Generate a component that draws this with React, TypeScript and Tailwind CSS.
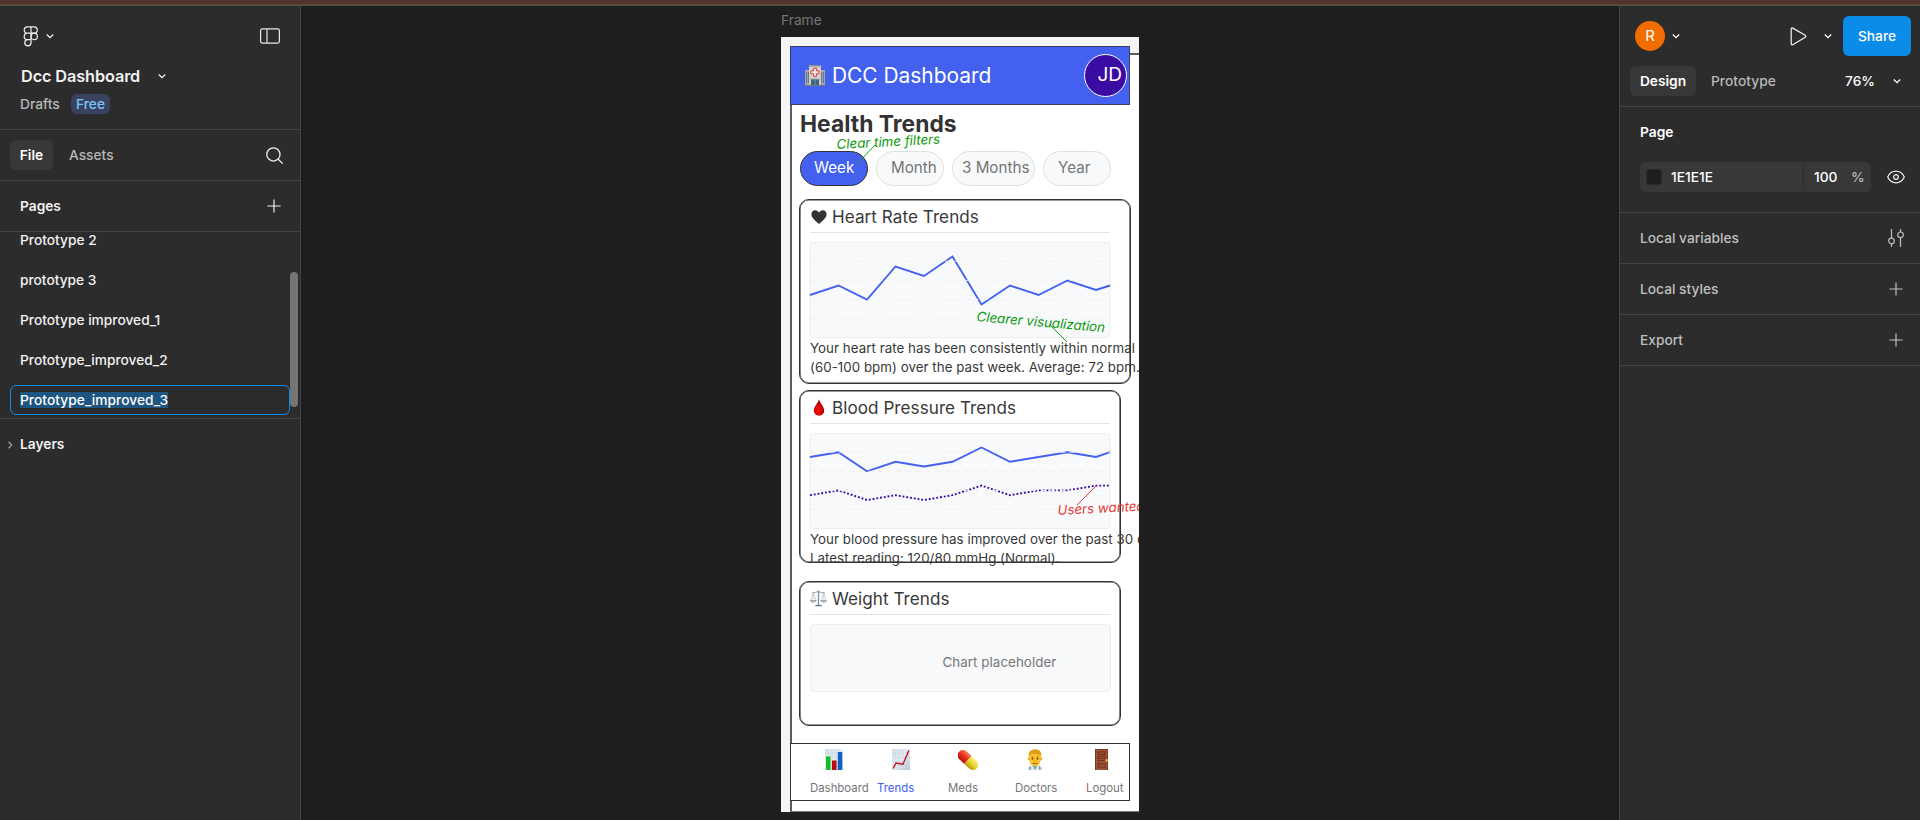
import type { ReactNode } from "react";

const UI = "font-['Inter',sans-serif] text-[13.75px] tracking-[0px]";

function Chevron({ className = "" }: { className?: string }) {
  return (
    <svg className={`h-2 w-2 shrink-0 ${className}`} viewBox="0 0 8 8" fill="none" stroke="currentColor" strokeWidth="1.3">
      <path d="M.8 2.500 4 5.700 7.200 2.500" />
    </svg>
  );
}

function Plus() {
  return (
    <svg className="h-[14px] w-[14px] shrink-0" viewBox="0 0 14 14" stroke="currentColor" strokeWidth="1.2">
      <path d="M7 .4v13.2M.4 7h13.2" />
    </svg>
  );
}

function LeftPanel() {
  return (
    <aside className={`${UI} flex w-[301px] shrink-0 flex-col border-r border-[#444] bg-[#2c2c2c] font-[450] text-[#f2f2f2]`}>
      <header className="flex h-[124px] shrink-0 flex-col border-b border-[#444] px-5">
        <div className="mt-4 flex h-7 items-center">
          <svg className="ml-[3px] h-[21px] w-4" viewBox="0 0 16 21" fill="none" stroke="#f0f0f0" strokeWidth="1.2">
            <path d="M8 .9H4.4a3.1 3.1 0 0 0 0 6.3H8zM8 .9h3.1a3.1 3.1 0 0 1 0 6.3H8zM8 7.2H4.4a3.1 3.1 0 0 0 0 6.4H8zM8 13.6H4.6a3.1 3.1 0 1 0 3.4 3.1z" />
            <circle cx="11.2" cy="10.4" r="3.2" />
          </svg>
          <Chevron className="ml-[7px]" />
          <svg className="ml-auto h-4 w-5" viewBox="0 0 20 16" fill="none" stroke="#e8e8e8" strokeWidth="1.2">
            <rect x=".6" y=".9" width="18.8" height="14.2" rx="1.8" />
            <path d="M7 1v14" />
          </svg>
        </div>
        <div className="mt-3 flex h-7 items-center">
          <span className="pl-px text-[16.25px] leading-6 font-[600] tracking-[-0.1px]">Dcc Dashboard</span>
          <Chevron className="mr-[114px] ml-auto" />
        </div>
        <div className="mt-1 flex h-5 items-center">
          <span className="w-[41px] text-[#b8b8b8]">Drafts</span>
          <span className="ml-[10px] flex h-5 w-[39px] items-center justify-center rounded-md bg-[#394360] text-[#7cc4f8]">Free</span>
        </div>
      </header>
      <div className="flex h-[51px] shrink-0 items-center border-b border-[#444] pr-[17px] pl-[10px]">
        <span className="flex h-[30px] w-[43px] items-center justify-center rounded-md bg-[#383838] font-[600] text-white">File</span>
        <span className="ml-4 text-[#b8b8b8]">Assets</span>
        <svg className="ml-auto h-[17px] w-[17px]" viewBox="0 0 17 17" fill="none" stroke="#f0f0f0" strokeWidth="1.25">
          <circle cx="7.4" cy="7.4" r="6.6" />
          <path d="m12.1 12.1 4.5 4.5" />
        </svg>
      </div>
      <div className="flex h-[51px] shrink-0 items-center justify-between border-b border-[#444] pr-[19px] pl-5 font-[600]">
        <span>Pages</span>
        <Plus />
      </div>
      <div className="flex h-[187px] shrink-0 overflow-hidden border-b border-[#444]">
        <ul className="-mt-3 flex w-[290px] flex-col">
          {["Prototype 2", "prototype 3", "Prototype improved_1", "Prototype_improved_2"].map((n) => (
            <li key={n} className="flex h-10 shrink-0 items-center pl-5">{n}</li>
          ))}
          <li className="mt-[5px] ml-[10px] flex h-[30px] shrink-0 items-center rounded-md border border-[#0c8ce9] pl-[9px]">
            <span className="bg-[#1f5581] leading-4 tracking-[0.05px] text-white">Prototype_improved_3</span>
          </li>
        </ul>
        <div className="mt-10 h-[135px] w-2 rounded-full bg-[#757575]" />
      </div>
      <div className="flex h-[51px] shrink-0 items-center pl-[6px] font-[600]">
        <Chevron className="-rotate-90 text-[#999]" />
        <span className="ml-[6px]">Layers</span>
      </div>
    </aside>
  );
}

function Section({ title, children }: { title: string; children: ReactNode }) {
  return (
    <div className="flex h-[51px] shrink-0 items-center justify-between border-b border-[#444] pr-[17px] pl-5 font-[550] text-[#bfbfbf]">
      <span>{title}</span>
      {children}
    </div>
  );
}

function RightPanel() {
  return (
    <aside className={`${UI} flex w-[301px] shrink-0 flex-col border-l border-[#444] bg-[#2c2c2c] font-[450] text-white`}>
      <header className="flex h-[101px] shrink-0 flex-col border-b border-[#444]">
        <div className="mt-[10px] flex h-10 items-center pr-[9px] pl-[15px]">
          <span className="flex h-[30px] w-[30px] items-center justify-center rounded-full bg-[#f26d00] text-[15px] font-normal">R</span>
          <Chevron className="ml-[7px]" />
          <svg className="ml-auto h-[19px] w-[17px]" viewBox="0 0 17 19" fill="none" stroke="#f0f0f0" strokeWidth="1.25" strokeLinejoin="round">
            <path d="M1.2 2.1c0-.9.8-1.4 1.6-1l12.4 7.2c.8.5.8 1.5 0 2L2.8 17.8c-.8.4-1.6-.1-1.6-1z" />
          </svg>
          <Chevron className="ml-[17px]" />
          <span className="ml-[11px] flex h-10 w-[68px] items-center justify-center rounded-md bg-[#0c8ce9] font-[550]">Share</span>
        </div>
        <div className="mt-[10px] flex h-[30px] items-center pr-[19px] pl-[10px]">
          <span className="flex h-[30px] w-[66px] items-center justify-center rounded-md bg-[#383838] font-[600]">Design</span>
          <span className="ml-[15px] tracking-[0.05px] text-[#b8b8b8]">Prototype</span>
          <span className="ml-auto">76%</span>
          <Chevron className="ml-[18px]" />
        </div>
      </header>
      <div className="flex h-[106px] shrink-0 flex-col border-b border-[#444] px-5">
        <span className="mt-[15px] leading-5 font-[600]">Page</span>
        <div className="mt-5 flex h-[30px] w-[265px] items-center justify-between">
          <div className="flex h-[30px] w-[231px] items-center rounded-md bg-[#383838]">
            <span className="ml-[6px] h-4 w-4 rounded-[3px] border border-[#2b2b2b] bg-[#1e1e1e]" />
            <span className="ml-[9px] w-[132px]">1E1E1E</span>
            <span className="h-7 w-px bg-[#2c2c2c]" />
            <span className="ml-[10px] w-[38px]">100</span>
            <span className="-ml-px text-[#b8b8b8]">%</span>
          </div>
          <svg className="h-[14px] w-[18px]" viewBox="0 0 18 14" fill="none" stroke="#f0f0f0" strokeWidth="1.2">
            <path d="M.7 7C2.4 3.200 5.400 1.200 9 1.200S15.600 3.200 17.300 7C15.600 10.800 12.600 12.800 9 12.800S2.400 10.800.7 7z" />
            <circle cx="9" cy="7" r="2.300" />
          </svg>
        </div>
      </div>
      <Section title="Local variables">
        <svg className="-mr-px h-[18px] w-4" viewBox="0 0 16 18" fill="none" stroke="currentColor" strokeWidth="1.2">
          <path d="M3.500 0v9M3.500 14.800V18M12.500 0v3M12.500 8.600V18" />
          <circle cx="3.500" cy="11.900" r="2.800" />
          <circle cx="12.500" cy="5.800" r="2.800" />
        </svg>
      </Section>
      <Section title="Local styles"><Plus /></Section>
      <Section title="Export"><Plus /></Section>
    </aside>
  );
}

function Hospital() {
  return (
    <svg className="-mt-px h-[21px] w-5" viewBox="0 0 20 21">
      <path d="M0 5h5v15H0zM15 5h5v15h-5z" fill="#a3a8aa" />
      <path d="M4 1h12v19H4z" fill="#d0d0ce" />
      <path d="M3.500 0h13v1.500h-13z" fill="#8d9296" />
      <path d="M1.200 7h.9v11h-.9zM3 7h.8v11H3zM16.200 7h.8v11h-.8zM17.900 7h.9v11h-.9z" fill="#5b6c7c" />
      <path d="M8.600 3.200h2.800v2.700h2.700v2.800h-2.700v2.700H8.600V8.700H5.900V5.900h2.700z" fill="#f4efee" stroke="#e0393e" strokeWidth="1" />
      <path d="M6 15h8v5H6z" fill="#3f6380" />
      <path d="M5.500 13.800h9v1.400h-9z" fill="#75868f" />
      <path d="M10 15v5" stroke="#9fb9c9" strokeWidth=".5" />
      <path d="M0 19.800h20V21H0z" fill="#777b78" />
    </svg>
  );
}

function Heart() {
  return (
    <svg className="h-[14px] w-4" viewBox="0 0 16 14">
      <path d="M8 14C5 11.300.4 8.300.4 4.300.4 1.800 2.100.2 4.200.2 5.900.2 7.300 1.100 8 2.800 8.700 1.100 10.100.2 11.800.2c2.100 0 3.800 1.600 3.800 4.100 0 4-4.600 7-7.600 9.700z" fill="#333" />
    </svg>
  );
}

function Drop() {
  return (
    <svg className="-mt-[2px] h-[17px] w-4" viewBox="0 0 16 17">
      <defs>
        <radialGradient id="blood" cx=".42" cy=".68" r=".6">
          <stop offset="0" stopColor="#f11208" />
          <stop offset=".55" stopColor="#d50705" />
          <stop offset="1" stopColor="#850000" />
        </radialGradient>
      </defs>
      <path d="M8 .3C9 4.500 13.200 7.600 13.200 11.700A5.100 5.100 0 0 1 8 16.800a5.100 5.100 0 0 1-5.200-5.100C2.800 7.600 7 4.500 8 .3z" fill="url(#blood)" />
    </svg>
  );
}

function Scales() {
  return (
    <svg className="-mt-[2px] h-[17px] w-[17px]" viewBox="0 0 17 17" fill="none" stroke="#83919f" strokeWidth=".7">
      <path d="M8.500.5v14" strokeWidth="1.300" />
      <path d="M2.500 2.600C5 3 6 1.500 8.500 1.800S12 3 14.500 2.600" strokeWidth="1" />
      <path d="M3.200 2.700.8 10.500M3.200 2.700l2.700 7.800M3.200 2.700v7.800M13.800 2.700l-2.700 7.800M13.800 2.700l2.400 7.800M13.800 2.700v7.800" stroke="#b4bec8" />
      <path d="M.3 10.500h6c-.5 2.200-5.500 2.200-6 0zM10.700 10.500h6c-.5 2.200-5.500 2.200-6 0z" fill="#c3ccd5" />
      <path d="M5 16.300c0-1.600 1.500-1.300 3.500-1.800 2 .5 3.500.2 3.500 1.800z" fill="#697887" stroke="none" />
    </svg>
  );
}

function GraphTile({ children, id }: { children: ReactNode; id: string }) {
  return (
    <svg className="h-[21px] w-[18px]" viewBox="0 0 18 21">
      <defs>
        <linearGradient id={id} x1="0" y1="0" x2="1" y2="1">
          <stop offset="0" stopColor="#d0dfea" />
          <stop offset=".5" stopColor="#e6ecf2" />
          <stop offset="1" stopColor="#b9c9d8" />
        </linearGradient>
      </defs>
      <path d="M0 0h18v21H0z" fill={`url(#${id})`} />
      <path d="M0 4.200h18M0 8.400h18M0 12.600h18M0 16.800h18M3.600 0v21M7.200 0v21M10.800 0v21M14.400 0v21" stroke="#c2ced9" strokeWidth=".4" />
      {children}
    </svg>
  );
}

function Pill() {
  return (
    <svg className="h-5 w-5" viewBox="0 0 20 20">
      <defs>
        <linearGradient id="pillred" x1="0" y1="0" x2="0" y2="1">
          <stop offset="0" stopColor="#ff7a54" />
          <stop offset=".5" stopColor="#e63320" />
          <stop offset="1" stopColor="#b80f0d" />
        </linearGradient>
        <linearGradient id="pillyellow" x1="0" y1="0" x2="0" y2="1">
          <stop offset="0" stopColor="#fff28c" />
          <stop offset=".5" stopColor="#eed62c" />
          <stop offset="1" stopColor="#b39c0c" />
        </linearGradient>
      </defs>
      <g transform="rotate(43 10 10)">
        <path d="M10 4.600H3.200a5.400 5.400 0 0 0 0 10.800H10z" fill="url(#pillred)" />
        <path d="M10 4.600h6.800a5.400 5.400 0 0 1 0 10.800H10z" fill="url(#pillyellow)" />
      </g>
    </svg>
  );
}

function Doctor() {
  return (
    <svg className="h-[21px] w-[18px]" viewBox="0 0 18 21">
      <path d="M1 21c.3-3.600 3-4.500 8-4.500s7.700.9 8 4.500z" fill="#dfe7ed" />
      <path d="m6.300 16 2.700 5 2.700-5z" fill="#4fa9bf" />
      <path d="M4.500 17.300c-.5 1.200-.6 2.200-.4 3.700M13.500 17.300c.5 1.200.6 2.200.4 3.700" stroke="#58656d" strokeWidth=".9" fill="none" />
      <ellipse cx="9" cy="9.500" rx="6" ry="8" fill="#fbc42c" />
      <circle cx="3" cy="9.800" r="1.400" fill="#f0b01e" />
      <circle cx="15" cy="9.800" r="1.400" fill="#f0b01e" />
      <path d="M2.900 8.500C1.700 3 5 .2 9.300.2S16.300 3 15.100 8.500L14 5.400C11 5.600 8 5.400 6 4.300L4 6z" fill="#e09d12" />
      <path d="M5.300 7.900h2.200M10.500 7.900h2.200" stroke="#a06b14" strokeWidth=".8" />
      <circle cx="6.500" cy="9.700" r=".9" fill="#51341c" />
      <circle cx="11.500" cy="9.700" r=".9" fill="#51341c" />
      <path d="M8.200 11.800h1.600" stroke="#d28a15" strokeWidth=".7" />
      <path d="M6.700 14.200q2.300.9 4.600 0" stroke="#8d4b12" strokeWidth=".9" fill="none" />
    </svg>
  );
}

function Door() {
  return (
    <svg className="h-[21px] w-[13px]" viewBox="0 0 13 21">
      <path d="M0 0h13v21H0z" fill="#783b22" />
      <path d="M1 1h11v20H1z" fill="#a4563a" />
      <path d="M2.800 2.800h7.400v2.700H2.800zM2.800 7h7.400v2.700H2.800zM2.800 14.500h7.400v4.300H2.800z" fill="#96492f" stroke="#6c301a" strokeWidth=".8" />
      <path d="M2.800 11.700h7" stroke="#6c301a" strokeWidth="1.200" />
      <circle cx="11.800" cy="11.200" r="1.300" fill="#e6b130" />
    </svg>
  );
}

const GRID = [19.2, 38.3, 57.4, 76.5];

function Chart({ line, dotted }: { line: string; dotted?: string }) {
  return (
    <svg className="-ml-px block h-24 w-[302px]" viewBox="-0.5 0 302 96" fill="none">
      <rect x=".5" y=".5" width="300" height="95" rx="3.800" fill="#f8f9fb" stroke="#ededef" />
      <polyline points={line} stroke="#4361ee" strokeWidth="1.900" />
      {dotted && <polyline points={dotted} stroke="#3a0ca3" strokeWidth="1.900" strokeDasharray="1.900 1.900" />}
      {GRID.map((y) => (
        <path key={y} d={`M1 ${y}H300`} stroke="#eeeef0" strokeWidth=".95" strokeDasharray="4.800 4.800" />
      ))}
    </svg>
  );
}

function Card({ icon, title, className, children }: { icon: ReactNode; title: string; className: string; children: ReactNode }) {
  return (
    <section className={`relative shrink-0 rounded-[10px] border border-[#333] shadow-[inset_0_0_0_0.6px_#333] ${className}`}>
      <div className="-mt-px ml-[10px] flex h-[34px] w-[300px] items-center border-b border-[#e4e4e4] pt-[3px]">
        <span className="flex w-[17px] justify-center">{icon}</span>
        <span className="ml-[5px] text-[17.100px] leading-5 tracking-[0.05px] whitespace-nowrap">{title}</span>
      </div>
      <div className="mt-[9px] ml-[10px]">{children}</div>
    </section>
  );
}

function Note({ className, children }: { className: string; children: ReactNode }) {
  return <span className={`absolute origin-bottom-left text-[13.300px] leading-4 whitespace-nowrap italic ${className}`}>{children}</span>;
}

const NAV = [
  { label: "Dashboard", icon: <GraphTile id="tile1"><path d="M1 7.500h4.500V21H1z" fill="#12bd24" /><path d="M7 11.500h4.500V21H7z" fill="#bd0b18" /><path d="M12.800 3h4.400v18h-4.400z" fill="#0d62c4" /></GraphTile>, iconBox: "ml-[15px]", text: "ml-0" },
  { label: "Trends", icon: <GraphTile id="tile2"><path d="m1 19.500 3-5.500 7 1.200L16.800 1.500" stroke="#c4121c" strokeWidth="1.400" fill="none" /></GraphTile>, iconBox: "ml-[15px]", text: "ml-0" },
  { label: "Meds", icon: <Pill />, iconBox: "ml-[14px]", text: "ml-[4px]" },
  { label: "Doctors", icon: <Doctor />, iconBox: "ml-[15px]", text: "ml-[4px]" },
  { label: "Logout", icon: <Door />, iconBox: "ml-[17px]", text: "ml-[8px]" },
];

function Artboard() {
  return (
    <div className="relative h-[775px] w-[358px] overflow-hidden bg-[#f5f5f5] font-['Inter',sans-serif] font-[390] text-[#383838]">
      <div className="flex h-full w-[370px] flex-col pl-[9px]">
        <div className="mt-4 h-[759px] w-[380px] shrink-0 border-2 border-b-0 border-[#5c5c5c] bg-white" />
        <div className="relative -mt-[766px] flex h-[59px] w-[340px] shrink-0 items-center border border-[#3a3f66] bg-[#4361ee] pr-[2px] pl-[14px] text-white">
          <Hospital />
          <span className="ml-[7px] text-[20.900px] leading-6">DCC Dashboard</span>
          <span className="ml-auto flex h-[43px] w-[43px] items-center justify-end rounded-full border border-white bg-[#3a0ca3] pr-[4px] text-[19px]">JD</span>
        </div>
        <main className="relative flex h-[638px] flex-col pl-[9px]">
          <h1 className="mt-[5px] ml-px text-[22.800px] leading-7 font-bold tracking-[0.04px] text-[#333]">Health Trends</h1>
          <div className="mt-[13px] ml-px flex h-[35px] text-[15.200px] text-[#757575]">
            <span className="flex w-[68px] items-center rounded-full border border-[#333] bg-[#4361ee] pl-[13px] text-white">Week</span>
            <span className="ml-2 flex w-[68px] items-center rounded-full border border-[#e0e0e0] bg-[#f8f9fb] pl-[14px]">Month</span>
            <span className="ml-2 flex w-[83px] items-center rounded-full border border-[#e0e0e0] bg-[#f8f9fb] pl-[9px] whitespace-nowrap">3 Months</span>
            <span className="ml-2 flex w-[68px] items-center rounded-full border border-[#e0e0e0] bg-[#f8f9fb] pl-[14px]">Year</span>
          </div>
          <Card icon={<Heart />} title="Heart Rate Trends" className="mt-[13px] h-[185px] w-[332px]">
            <Chart line="0.5,53 29,43.500 57.500,57.500 86,24.500 114.500,34 143,14.500 172,62.500 200.500,43.500 229,53 258,38.500 286.500,48 300.500,43.500" />
            <p className="pt-px text-[13.300px] leading-[19px] tracking-[0.050px] whitespace-nowrap">Your heart rate has been consistently within normal<br />(60-100 bpm) over the past week. Average: 72 bpm.</p>
          </Card>
          <Card icon={<Drop />} title="Blood Pressure Trends" className="mt-[6px] h-[173px] w-[322px]">
            <Chart line="0.5,24 29,19.200 57.500,38.300 86,28.800 114.500,33.500 143,28.800 172,14.500 200.500,28.800 229,24 258,19.200 286.500,24 300.500,19.200" dotted="0.5,62.200 29,57.400 57.500,67 86,62.200 114.500,67 143,62.200 172,52.600 200.500,62.200 229,57.400 258,57.400 286.500,52.600 300.500,52.600" />
            <p className="pt-px text-[13.300px] leading-[19px] tracking-[0.030px] whitespace-nowrap">Your blood pressure has improved over the past 30 days.<br />Latest reading: 120/80 mmHg (Normal).</p>
          </Card>
          <Card icon={<Scales />} title="Weight Trends" className="mt-[18px] h-[145px] w-[322px]">
            <div className="-ml-[0.5px] flex h-[68px] w-[301px] items-center rounded-[4px] border border-[#ededef] bg-[#f8f9fb] pt-[10px] pl-[132px] text-[13.300px] tracking-[0.080px] text-[#757575]">Chart placeholder</div>
          </Card>
        </main>
        <nav className="relative grid h-[58px] w-[340px] shrink-0 grid-cols-[67px_67px_67px_67px_50px] border border-[#333] bg-white pl-[19px] text-[11.400px] text-[#757575]">
          {NAV.map((n) => (
            <div key={n.label} className="flex flex-col">
              <span className={`mt-[5px] flex h-[21px] items-center ${n.iconBox}`}>{n.icon}</span>
              <span className={`mt-[10px] leading-4 ${n.text} ${n.label === "Trends" ? "text-[#4361ee]" : ""}`}>{n.label}</span>
            </div>
          ))}
        </nav>
        <div className="relative mt-[10px] h-px shrink-0 bg-[#777]" />
      </div>
      <svg className="absolute inset-0 h-full w-full" viewBox="0 0 358 775" fill="none" strokeWidth="1">
        <path d="M94 108 76 127" stroke="#209a20" />
        <path d="m269 288 17 17" stroke="#1a9e1a" />
        <path d="m296 468 19-19" stroke="#e53935" />
      </svg>
      <Note className="top-[99px] left-[56px] -rotate-3 text-[#0c9a0c]">Clear time filters</Note>
      <Note className="top-[271px] left-[195px] rotate-5 text-[#0c9a0c]">Clearer visualization</Note>
      <Note className="top-[465px] left-[277px] -rotate-3 text-[#e53935]">Users wanted this</Note>
    </div>
  );
}

export default function App() {
  return (
    <div className="flex h-[820px] w-[1920px] flex-col overflow-hidden bg-[#1e1e1e]">
      <div className="h-[6px] shrink-0 border-b-2 border-[#594a42] bg-[#53342d]" />
      <div className="flex min-h-0 flex-1">
        <LeftPanel />
        <div className="flex flex-1 flex-col pl-[480px]">
          <span className={`${UI} mt-[4px] mb-[7px] leading-5 text-[#757575]`}>Frame</span>
          <Artboard />
        </div>
        <RightPanel />
      </div>
    </div>
  );
}
